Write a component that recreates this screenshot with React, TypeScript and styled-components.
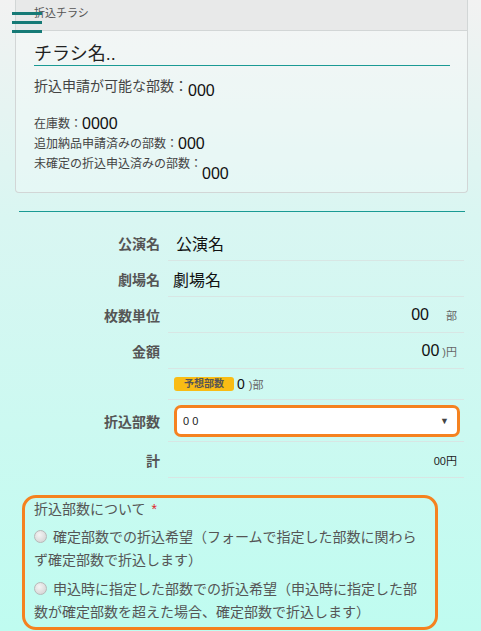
import React from "react";
import styled, { createGlobalStyle } from "styled-components";

const GlobalStyle = createGlobalStyle`
  html, body {
    margin: 0;
    padding: 0;
  }
  body {
    font-family: "Liberation Sans", "Noto Sans CJK JP", sans-serif;
    color: #333;
    background: linear-gradient(180deg, #f2f2f2 0px, #d9f6f2 220px, #bffcf0 631px);
    min-height: 631px;
  }
`;

const Page = styled.div`
  position: relative;
  width: 481px;
  height: 631px;
  overflow: hidden;
`;

const Hamburger = styled.div`
  position: absolute;
  left: 12px;
  top: 12px;
  width: 30px;
  display: flex;
  flex-direction: column;
  gap: 6px;

  span {
    display: block;
    height: 3px;
    background-color: #167a76;
  }
`;

const Card = styled.div`
  margin: 0 13px 0 15px;
  border: 1px solid #d2d6d6;
  border-top: none;
  border-radius: 0 0 4px 4px;
  background-color: rgba(255, 255, 255, 0.25);
`;

const CardHeader = styled.div`
  height: 31px;
  box-sizing: border-box;
  padding: 4px 0 0 18px;
  background-color: #e8e9e9;
  border-bottom: 1px solid #d2d6d6;
  font-size: 11px;
  color: #555;
`;

const CardBody = styled.div`
  padding: 12px 17px 8px 18px;
`;

const FlyerName = styled.div`
  font-size: 18px;
  color: #222;
  height: 22px;
  line-height: 22px;
  border-bottom: 1px solid #1a9a94;
`;

const InfoLine = styled.div<{ $big?: boolean; $drop?: number }>`
  display: flex;
  align-items: flex-start;
  color: #444;
  font-size: ${(p) => (p.$big ? "14px" : "12px")};
  margin-top: ${(p) => (p.$big ? "10px" : "0")};
  line-height: 20px;

  b {
    font-weight: normal;
    font-size: 16px;
    color: #111;
    margin-top: ${(p) => p.$drop || 0}px;
  }
`;

const Spacer = styled.div`
  height: 13px;
`;

const Divider = styled.div`
  margin: 18px 16px 0 19px;
  height: 1px;
  background-color: #1a9a94;
`;

const Rows = styled.div`
  margin-top: 13px;
  padding-right: 17px;
`;

const Row = styled.div<{ $h?: number }>`
  display: grid;
  grid-template-columns: 160px 1fr;
  column-gap: 8px;
  height: ${(p) => p.$h || 36}px;
`;

const Label = styled.div`
  display: flex;
  align-items: center;
  justify-content: flex-end;
  font-size: 14px;
  font-weight: bold;
  color: #555;
`;

const Value = styled.div<{ $right?: boolean; $pad?: number }>`
  display: flex;
  align-items: center;
  justify-content: ${(p) => (p.$right ? "flex-end" : "flex-start")};
  border-bottom: 1px solid #d8e6e4;
  padding: 0 ${(p) => (p.$right ? 7 : 0)}px 0 ${(p) => p.$pad ?? 6}px;
  font-size: 16px;
  color: #111;
`;

const Unit = styled.span<{ $gap?: number }>`
  font-size: 11px;
  color: #666;
  margin-left: ${(p) => p.$gap || 2}px;
`;

const Badge = styled.span`
  display: inline-block;
  background-color: #f9bc14;
  color: #555;
  font-size: 10px;
  font-weight: bold;
  height: 14px;
  line-height: 14px;
  padding: 0 10px;
  border-radius: 3px;
  margin-right: 3px;
`;

const SmallNum = styled.span`
  font-size: 14px;
  color: #111;
`;

const SelectBox = styled.div`
  flex: 1;
  height: 32px;
  box-sizing: border-box;
  border: 3px solid #f58220;
  border-radius: 7px;
  background-color: #fff;
  display: flex;
  align-items: center;
  justify-content: space-between;
  padding: 0 8px 0 6px;
  font-size: 11px;
  color: #222;
  margin-right: 4px;

  i {
    font-style: normal;
    font-size: 9px;
    color: #444;
  }
`;

const Total = styled.span`
  font-size: 11px;
  color: #222;
`;

const ChoiceBox = styled.div`
  margin: 17px 0 0 22px;
  width: 416px;
  box-sizing: border-box;
  border: 3px solid #f58220;
  border-radius: 14px;
  padding: 0 16px 3px 9px;
  font-size: 14px;
  color: #555;
  line-height: 22px;
`;

const Required = styled.span`
  color: #e0242a;
  margin-left: 6px;
`;

const Choice = styled.label`
  display: block;
  margin-top: 6px;
  line-height: 23px;
`;

const Radio = styled.span`
  display: inline-block;
  width: 11px;
  height: 11px;
  border-radius: 50%;
  border: 1px solid #b8b8b8;
  background: radial-gradient(circle at 40% 35%, #f4f4f4, #cfcfcf);
  margin-right: 6px;
  vertical-align: -1px;
`;

const App: React.FC = () => {
  return (
    <Page>
      <GlobalStyle />
      <Card>
        <CardHeader>折込チラシ</CardHeader>
        <CardBody>
          <FlyerName>チラシ名..</FlyerName>
          <InfoLine $big $drop={5}>
            折込申請が可能な部数：<b>000</b>
          </InfoLine>
          <Spacer />
          <InfoLine>
            在庫数：<b>0000</b>
          </InfoLine>
          <InfoLine>
            追加納品申請済みの部数：<b>000</b>
          </InfoLine>
          <InfoLine $drop={10}>
            未確定の折込申込済みの部数：<b>000</b>
          </InfoLine>
        </CardBody>
      </Card>
      <Hamburger>
        <span />
        <span />
        <span />
      </Hamburger>

      <Divider />

      <Rows>
        <Row>
          <Label>公演名</Label>
          <Value $pad={8}>公演名</Value>
        </Row>
        <Row>
          <Label>劇場名</Label>
          <Value $pad={5}>劇場名</Value>
        </Row>
        <Row>
          <Label>枚数単位</Label>
          <Value $right>
            00<Unit $gap={17}>部</Unit>
          </Value>
        </Row>
        <Row>
          <Label>金額</Label>
          <Value $right>
            00<Unit $gap={3}>)円</Unit>
          </Value>
        </Row>
        <Row $h={31}>
          <Label />
          <Value $pad={6}>
            <Badge>予想部数</Badge>
            <SmallNum>0</SmallNum>
            <Unit $gap={4}>)部</Unit>
          </Value>
        </Row>
        <Row $h={42}>
          <Label>折込部数</Label>
          <Value $pad={6}>
            <SelectBox>
              <span>0 0</span>
              <i>▼</i>
            </SelectBox>
          </Value>
        </Row>
        <Row>
          <Label>計</Label>
          <Value $right>
            <Total>00円</Total>
          </Value>
        </Row>
      </Rows>

      <ChoiceBox>
        折込部数について<Required>*</Required>
        <Choice>
          <Radio />
          確定部数での折込希望（フォームで指定した部数に関わらず確定部数で折込します）
        </Choice>
        <Choice>
          <Radio />
          申込時に指定した部数での折込希望（申込時に指定した部数が確定部数を超えた場合、確定部数で折込します）
        </Choice>
      </ChoiceBox>
    </Page>
  );
};

export default App;
